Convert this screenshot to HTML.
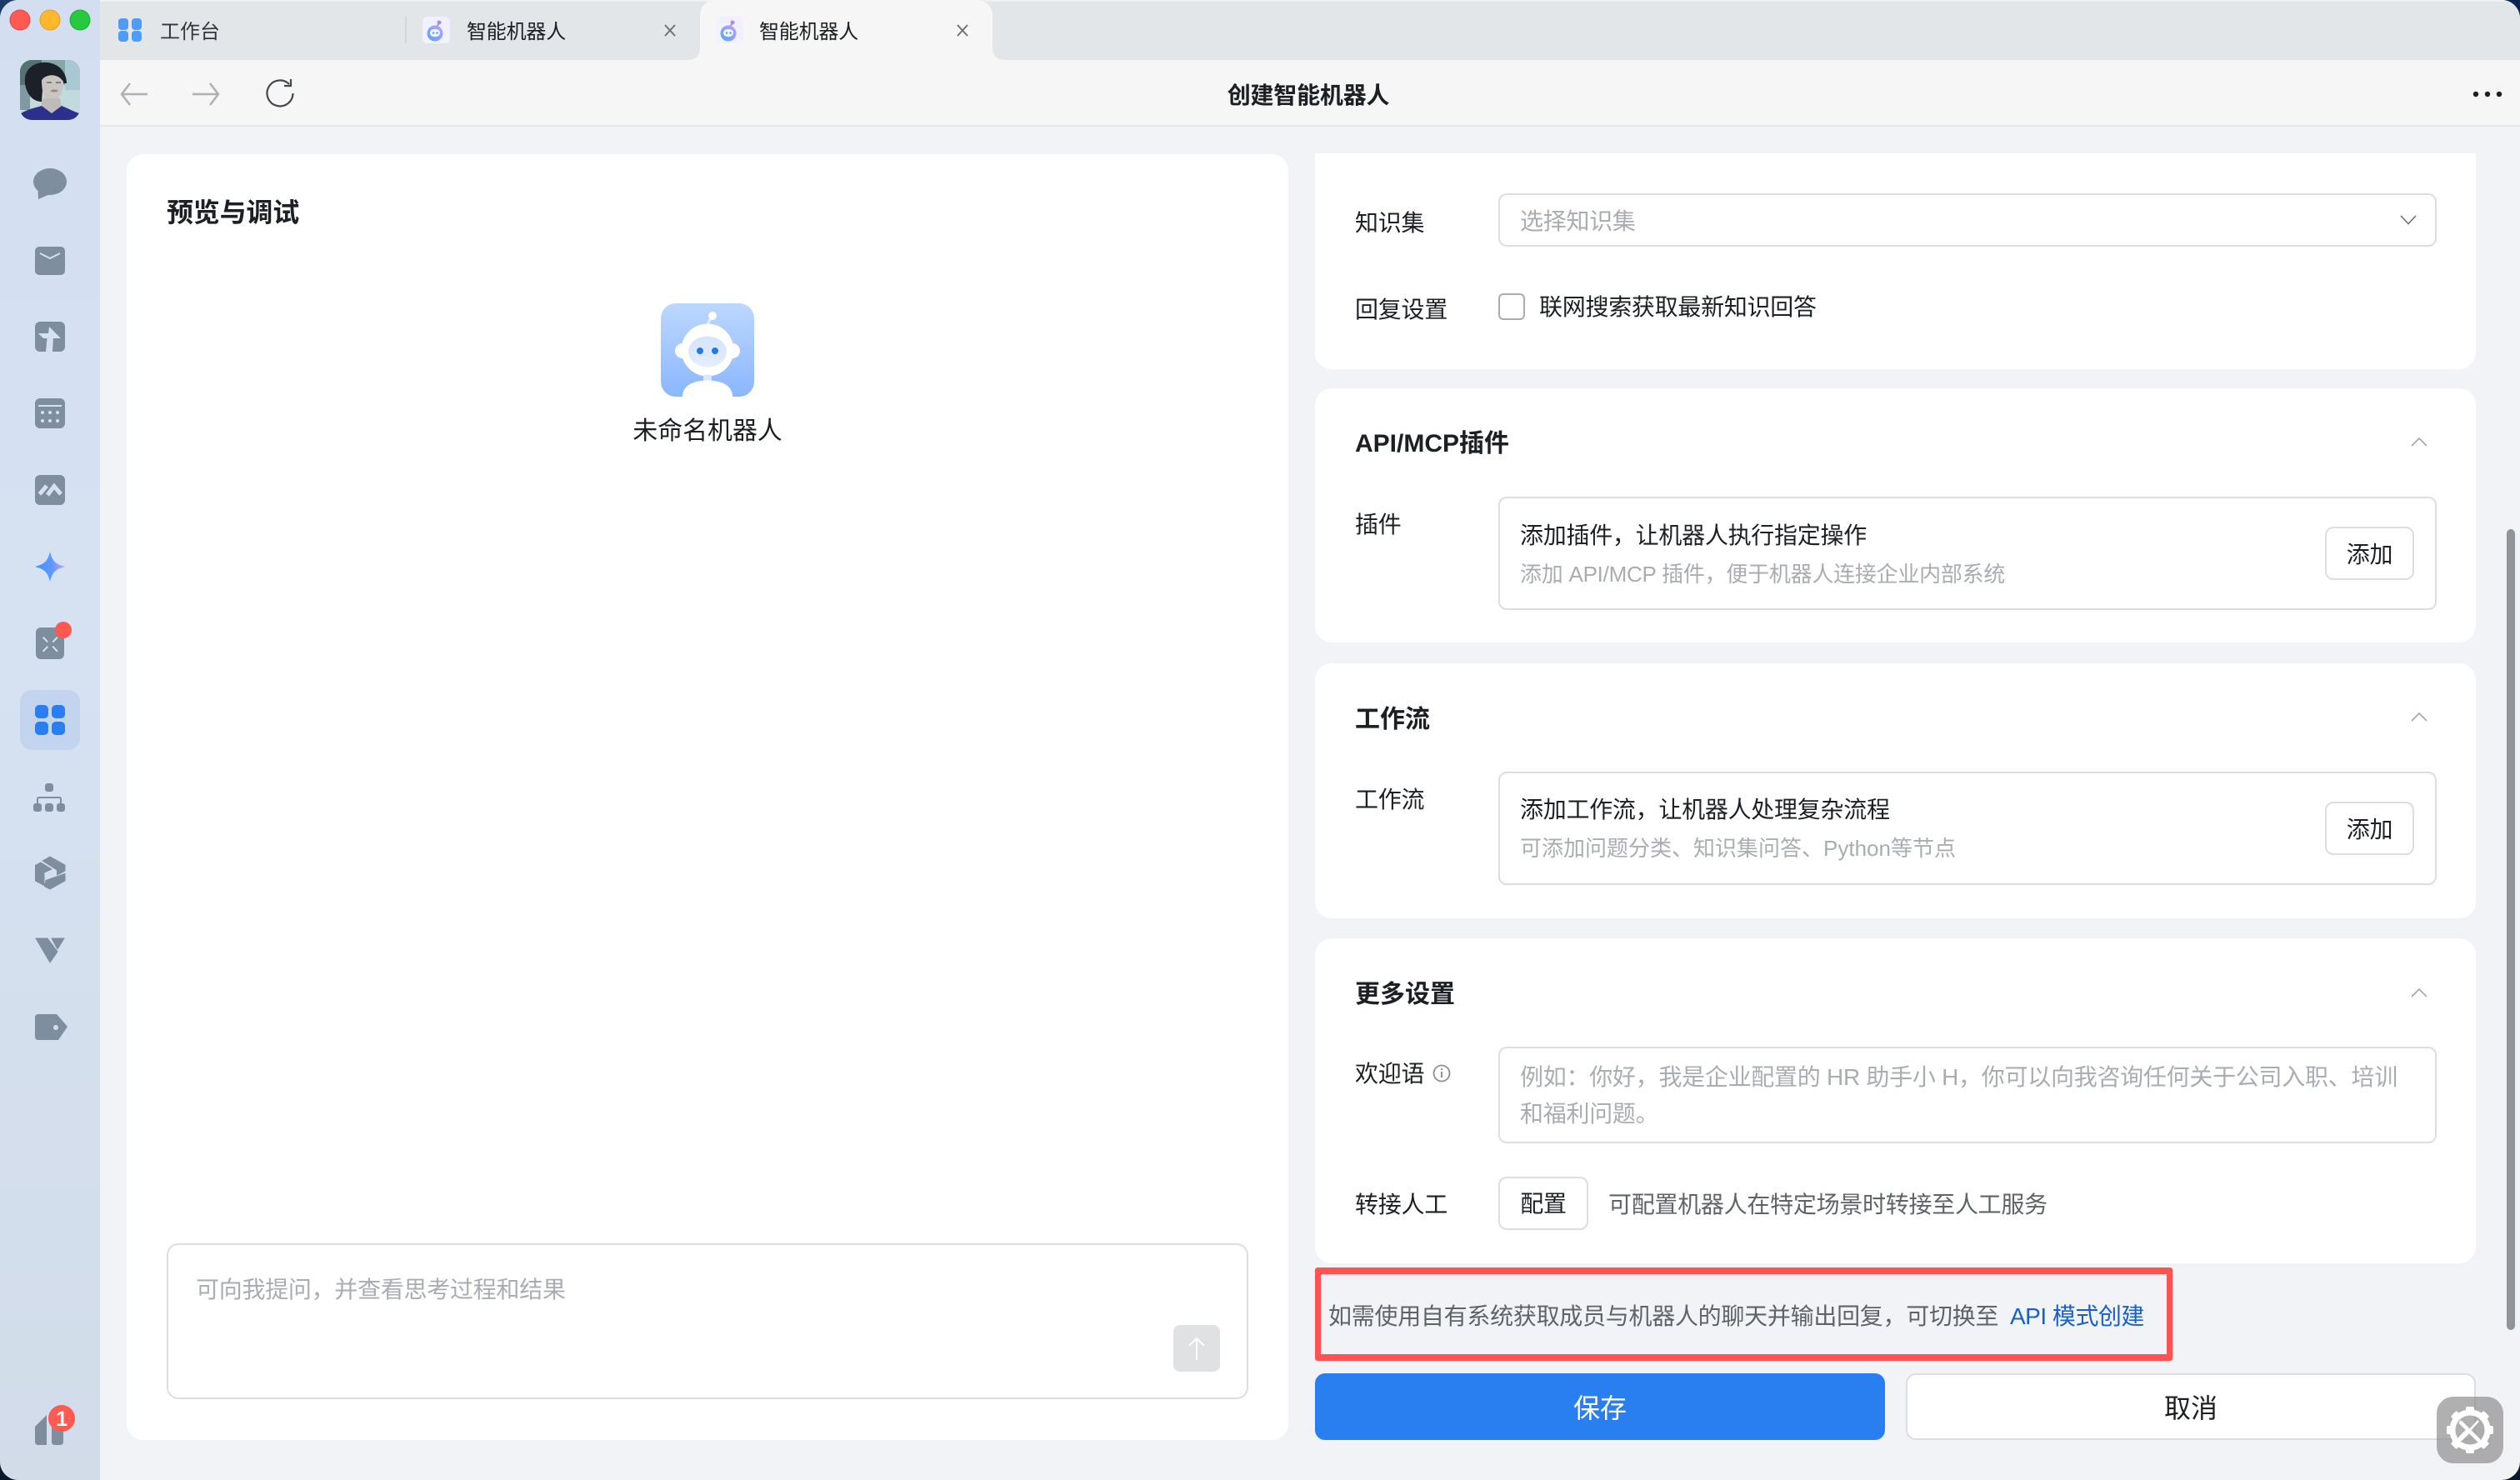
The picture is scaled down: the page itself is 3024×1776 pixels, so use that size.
<!DOCTYPE html>
<html lang="zh"><head><meta charset="utf-8"><title>创建智能机器人</title>
<style>
html,body{margin:0;padding:0;width:3024px;height:1776px;overflow:hidden;background:#0a1a2c}
body{position:relative;font-family:"Liberation Sans","Noto Sans CJK SC",sans-serif;color:#1c1f23;font-size:28px;letter-spacing:-.27px}
div,span{box-sizing:border-box}
.c{position:absolute;width:40px;height:40px}
#win{position:absolute;left:0;top:0;width:3024px;height:1776px;border-radius:22px;overflow:hidden;background:#f1f3f7}
#side{position:absolute;left:0;top:0;width:120px;height:1776px;background:linear-gradient(180deg,#d3dff1 0%,#d6e2f2 40%,#d2dce9 100%)}
#strip{position:absolute;left:120px;top:0;right:0;height:72px;background:#e3e6e9;border-top:2px solid #f0f1f2}
#nav{position:absolute;left:120px;top:72px;right:0;height:80px;background:#f6f6f6;border-bottom:2px solid #e6e8e8}
#tab{position:absolute;left:840px;top:0;width:351px;height:72px;background:#f6f6f6;border-radius:18px 18px 0 0}
.t{position:absolute;white-space:nowrap;line-height:40px;height:40px;margin-top:2px}
.ph{color:#a9acb1}.b{font-weight:700;letter-spacing:0}.s{color:#5f6368}
.card{position:absolute;background:#fff;border-radius:20px}
.box{position:absolute;background:#fff;border:2px solid #dcdde0;border-radius:10px}
.btn{position:absolute;background:#fff;border:2px solid #dcdde0;border-radius:10px;text-align:center}
</style></head><body>
<div class="c" style="left:0;top:0;background:#1d3d66"></div>
<div class="c" style="right:0;top:0;background:#0b2550"></div>
<div class="c" style="left:0;bottom:0;background:#0a1a2c"></div>
<div class="c" style="right:0;bottom:0;background:#0a1a2c"></div>
<div id="win">
<div id="side"></div>
<div id="strip"></div>
<div id="nav"></div>
<div id="tab"></div>
<span class="t" style="left:192px;top:17px;font-size:24px;color:#33363b;letter-spacing:0">工作台</span>
<div style="position:absolute;left:486px;top:20px;width:2px;height:32px;background:#d3d6d9"></div>
<span class="t" style="left:560px;top:17px;font-size:24px;letter-spacing:-.2px">智能机器人</span>
<span class="t" style="left:911px;top:17px;font-size:24px;letter-spacing:-.2px">智能机器人</span>
<span class="t b" style="left:1470px;width:200px;text-align:center;top:93px;letter-spacing:-.2px">创建智能机器人</span>

<div class="card" style="left:152px;top:185px;width:1394px;height:1543px"></div>
<span class="t b" style="left:200px;top:233px;font-size:32px;letter-spacing:-.2px">预览与调试</span>
<span class="t" style="left:749px;width:200px;text-align:center;top:496px;font-size:30px;letter-spacing:-.1px">未命名机器人</span>
<div class="box" style="left:200px;top:1492px;width:1298px;height:187px;border-radius:14px"></div>
<span class="t ph" style="left:235px;top:1526px">可向我提问，并查看思考过程和结果</span>

<div class="card" style="left:1578px;top:184px;width:1393px;height:259px;border-radius:0 0 20px 20px"></div>
<span class="t" style="left:1626px;top:246px">知识集</span>
<div class="box" style="left:1798px;top:232px;width:1126px;height:64px"></div>
<span class="t ph" style="left:1824px;top:244px">选择知识集</span>
<span class="t" style="left:1626px;top:350px">回复设置</span>
<div class="box" style="left:1798px;top:352px;width:32px;height:32px;border-color:#a8abb0;border-radius:6px"></div>
<span class="t" style="left:1847px;top:347px">联网搜索获取最新知识回答</span>

<div class="card" style="left:1578px;top:466px;width:1393px;height:305px"></div>
<span class="t b" style="left:1626px;top:511px;font-size:30px">API/MCP插件</span>
<span class="t" style="left:1626px;top:608px">插件</span>
<div class="box" style="left:1798px;top:596px;width:1126px;height:136px"></div>
<span class="t" style="left:1824px;top:621px">添加插件，让机器人执行指定操作</span>
<span class="t ph" style="left:1824px;top:667px;font-size:26px;letter-spacing:-.25px">添加 API/MCP 插件，便于机器人连接企业内部系统</span>
<div class="btn" style="left:2790px;top:632px;width:107px;height:64px;line-height:64px">添加</div>

<div class="card" style="left:1578px;top:796px;width:1393px;height:306px"></div>
<span class="t b" style="left:1626px;top:842px;font-size:30px">工作流</span>
<span class="t" style="left:1626px;top:938px">工作流</span>
<div class="box" style="left:1798px;top:926px;width:1126px;height:136px"></div>
<span class="t" style="left:1824px;top:950px">添加工作流，让机器人处理复杂流程</span>
<span class="t ph" style="left:1824px;top:996px;font-size:26px;letter-spacing:0">可添加问题分类、知识集问答、Python等节点</span>
<div class="btn" style="left:2790px;top:962px;width:107px;height:64px;line-height:64px">添加</div>

<div class="card" style="left:1578px;top:1126px;width:1393px;height:390px"></div>
<span class="t b" style="left:1626px;top:1172px;font-size:30px">更多设置</span>
<span class="t" style="left:1626px;top:1267px">欢迎语</span>
<div class="box" style="left:1798px;top:1256px;width:1126px;height:116px"></div>
<div class="t ph" style="left:1824px;top:1269px;height:88px;line-height:44px">例如：你好，我是企业配置的 HR 助手小 H，你可以向我咨询任何关于公司入职、培训<br>和福利问题。</div>
<span class="t" style="left:1626px;top:1424px">转接人工</span>
<div class="btn" style="left:1798px;top:1412px;width:108px;height:64px;line-height:62px">配置</div>
<span class="t s" style="left:1930px;top:1424px">可配置机器人在特定场景时转接至人工服务</span>

<div style="position:absolute;left:1578px;top:1521px;width:1029px;height:112px;border:7px solid #ff5252;border-width:8px 7px;border-radius:3px"></div>
<span class="t s" style="left:1594px;top:1558px">如需使用自有系统获取成员与机器人的聊天并输出回复，可切换至</span>
<span class="t" style="left:2412px;top:1558px;color:#1a60c4;letter-spacing:-.5px">API 模式创建</span>

<div style="position:absolute;left:1578px;top:1648px;width:684px;height:80px;background:#2a7ff0;border-radius:12px;color:#fff;text-align:center;font-size:32px;line-height:84px;letter-spacing:0">保存</div>
<div class="btn" style="left:2287px;top:1648px;width:684px;height:80px;font-size:32px;line-height:80px;border-radius:12px;letter-spacing:0">取消</div>
<div style="position:absolute;left:3008px;top:635px;width:10px;height:961px;border-radius:5px;background:#919498"></div>

<svg width="3024" height="1776" viewBox="0 0 3024 1776" style="position:absolute;left:0;top:0">
<defs>
<linearGradient id="star" x1="0" x2="1" y1="0" y2="0"><stop offset="0" stop-color="#3f90ff"/><stop offset=".55" stop-color="#5f98ff"/><stop offset="1" stop-color="#c3a2f2"/></linearGradient>
<linearGradient id="bot" x1="0" x2="0" y1="0" y2="1"><stop offset="0" stop-color="#bdd7ff"/><stop offset="1" stop-color="#8ab7ff"/></linearGradient>
<linearGradient id="face" x1="0" x2="0" y1="0" y2="1"><stop offset="0" stop-color="#d4e4fb"/><stop offset="1" stop-color="#e4eefd"/></linearGradient>
<linearGradient id="tb" x1="0" x2="1" y1="1" y2="0"><stop offset="0" stop-color="#5aa0fa"/><stop offset="1" stop-color="#bda6f4"/></linearGradient>
<linearGradient id="tbg" x1="0" x2="1" y1="1" y2="0"><stop offset="0" stop-color="#eef4ff"/><stop offset="1" stop-color="#f4eeff"/></linearGradient>
<clipPath id="avc"><rect x="24" y="72" width="72" height="72" rx="14"/></clipPath>
</defs>
<!-- traffic lights -->
<circle cx="24" cy="24" r="12" fill="#ff5a52" stroke="#e2463f"/>
<circle cx="60" cy="24" r="12" fill="#ffb82e" stroke="#e09d20"/>
<circle cx="96" cy="24" r="12" fill="#27c93f" stroke="#1fae33"/>
<!-- avatar -->
<g clip-path="url(#avc)">
<rect x="24" y="72" width="72" height="72" fill="#c2d9de"/>
<rect x="24" y="72" width="72" height="30" fill="#86a6a9"/>
<rect x="24" y="72" width="26" height="34" fill="#55736f"/>
<rect x="78" y="72" width="18" height="36" fill="#a8c9d2"/>
<rect x="24" y="102" width="12" height="30" fill="#7f9aa0"/>
<path d="M30 100 C28 82 42 74 56 75 C70 76 80 86 80 100 L76 100 C72 92 60 90 52 94 L50 122 C40 122 32 114 30 100Z" fill="#1c2028"/>
<path d="M50 96 C56 88 70 88 76 98 C77 108 72 120 62 122 C54 122 50 112 50 96Z" fill="#c9c5c3"/>
<path d="M56 99 H62 M67 99 H73" stroke="#5a5256" stroke-width="1.200"/>
<ellipse cx="65" cy="109" rx="4.500" ry="1.500" fill="#a08484"/>
<path d="M50 118 L72 118 L74 130 L62 136 L50 130Z" fill="#bfbbba"/>
<path d="M24 144 V137 C32 131 44 129 50 127 L62 136 L74 127 C82 130 90 135 96 136 V144Z" fill="#2d2f8c"/>
</g>
<!-- tab icons -->
<g fill="#4f9bf7"><rect x="142" y="22" width="12" height="14" rx="4"/><rect x="158" y="22" width="12" height="14" rx="4"/><rect x="142" y="37" width="12" height="13" rx="4"/><rect x="158" y="37" width="12" height="13" rx="4"/></g>
<g>
<rect x="507" y="20" width="33" height="32" rx="6" fill="url(#tbg)"/>
<circle cx="527" cy="27" r="2.500" fill="#a78bf0"/><path d="M526 29 L523.500 33" stroke="#a78bf0" stroke-width="2"/>
<circle cx="522" cy="40" r="9.500" fill="url(#tb)"/><rect x="516" y="35" width="12" height="9" rx="4.500" fill="#f4f7ff"/>
<circle cx="520" cy="39.500" r="1.300" fill="#5aa0fa"/><circle cx="524.500" cy="39.500" r="1.300" fill="#5aa0fa"/>
</g>
<g transform="translate(352,0)">
<rect x="507" y="20" width="33" height="32" rx="6" fill="url(#tbg)"/>
<circle cx="527" cy="27" r="2.500" fill="#a78bf0"/><path d="M526 29 L523.500 33" stroke="#a78bf0" stroke-width="2"/>
<circle cx="522" cy="40" r="9.500" fill="url(#tb)"/><rect x="516" y="35" width="12" height="9" rx="4.500" fill="#f4f7ff"/>
<circle cx="520" cy="39.500" r="1.300" fill="#5aa0fa"/><circle cx="524.500" cy="39.500" r="1.300" fill="#5aa0fa"/>
</g>
<path d="M798 30 L810 43 M810 30 L798 43 M1149 30 L1161 43 M1161 30 L1149 43" stroke="#6f7378" stroke-width="2" fill="none"/>
<path d="M825 72 Q840 72 840 57 V72Z M1191 57 Q1191 72 1206 72 H1191Z" fill="#f6f6f6"/>
<!-- nav -->
<path d="M177 113 H146 M156 100 L146 113 L156 126 M231 113 H262 M252 100 L262 113 L252 126" stroke="#aeb0b3" stroke-width="2.500" fill="none"/>
<path d="M347 101 A15.500 15.500 0 1 0 351.500 112" stroke="#44474b" stroke-width="2.200" fill="none"/>
<path d="M349 95 V103 H341" stroke="#44474b" stroke-width="2.200" fill="none"/>
<circle cx="2971" cy="113" r="3.200" fill="#1c1f23"/><circle cx="2985" cy="113" r="3.200" fill="#1c1f23"/><circle cx="2999" cy="113" r="3.200" fill="#1c1f23"/>
<!-- sidebar icons -->
<g fill="#7f8e9e">
<ellipse cx="60" cy="218" rx="20" ry="16"/><path d="M45.500 228 L46 239 L60 233Z"/>
<rect x="42" y="296" width="36" height="34" rx="5"/>
<rect x="42" y="386" width="36" height="36" rx="6"/>
<rect x="42" y="478" width="36" height="36" rx="6"/>
<rect x="42" y="570" width="36" height="36" rx="6"/>
<rect x="43" y="753" width="34" height="38" rx="6"/>
<rect x="54" y="940" width="10" height="10" rx="3"/>
<rect x="40" y="964" width="10" height="10" rx="3"/><rect x="54" y="964" width="10" height="10" rx="3"/><rect x="68" y="964" width="10" height="10" rx="3"/>
<g stroke="#7f8e9e" stroke-width="1" stroke-linejoin="round">
<path d="M51 1033 L60 1028 L78 1038 V1045 L68.500 1050 V1044Z"/>
<path d="M55 1056.500 L78 1048.500 V1057 L60 1067 L53.500 1063.500Z"/>
<path d="M42.500 1038.500 L49 1035 L62 1043 L53 1047 V1062.500 L42.500 1057Z"/>
</g>
<path d="M43 1126 H57 L69 1142 L60 1155Z" stroke="#7f8e9e" stroke-width="1" stroke-linejoin="round"/>
<path d="M62 1126 H77 L69 1139Z" stroke="#7f8e9e" stroke-width="1" stroke-linejoin="round"/>
<path d="M46 1217 H68 L81 1232 L70 1248 H46 Q42 1248 42 1244 V1221 Q42 1217 46 1217Z"/>
<path d="M42 1712 L56 1698 V1734 H46 Q42 1734 42 1730Z"/>
<path d="M62 1708 H76 V1730 Q76 1734 72 1734 H66 Q62 1734 62 1730Z"/>
</g>
<path d="M48 304 L60 310 L72 304" stroke="#d5e0f0" stroke-width="2" fill="none"/>
<polygon points="46,400 58,400 59,392 73,406 64,406 63,422 55,422 56.500,406 52,406" fill="#d5e0f0"/>
<path d="M46 487 H74" stroke="#d5e0f0" stroke-width="2"/>
<g fill="#d5e0f0"><circle cx="51" cy="495" r="2"/><circle cx="60" cy="495" r="2"/><circle cx="69" cy="495" r="2"/><circle cx="51" cy="505" r="2"/><circle cx="60" cy="505" r="2"/><circle cx="69" cy="505" r="2"/></g>
<path d="M47.500 593 L56 583 M57 594 L65 583.500 L73 593" stroke="#d5e0f0" stroke-width="5" fill="none"/>
<path d="M60 662 C63 674 67 677 78 680 C67 683 63 686 60 698 C57 686 53 683 42 680 C53 677 57 674 60 662Z" fill="url(#star)"/>
<path d="M51.600 764.600 L57.300 770.400 M63.300 770.400 L69 764.600 M51.600 781.800 L57.300 775.700 M63.300 775.700 L69 781.800" stroke="#d5e0f0" stroke-width="2"/>
<circle cx="76" cy="756" r="10" fill="#ff5a52"/>
<rect x="24" y="828" width="72" height="72" rx="14" fill="#c3d4ee"/>
<g fill="#2a7ff0"><rect x="42" y="846" width="16" height="16" rx="5"/><rect x="62" y="846" width="16" height="16" rx="5"/><rect x="42" y="866" width="16" height="16" rx="5"/><rect x="62" y="866" width="16" height="16" rx="5"/></g>
<path d="M45 964 V959 Q45 957 47 957 H71 Q73 957 73 959 V964" stroke="#7f8e9e" stroke-width="2" fill="none"/>
<circle cx="67" cy="1233" r="3" fill="#d3deed"/>
<circle cx="74" cy="1702" r="16" fill="#ff5a52"/>
<text x="74" y="1711" text-anchor="middle" font-family="Liberation Sans" font-weight="700" font-size="25" fill="#fff">1</text>
<!-- robot -->
<g transform="translate(793,364)">
<rect width="112" height="112" rx="18" fill="url(#bot)"/>
<path d="M56 26 L60 17" stroke="#e4eefd" stroke-width="3"/><circle cx="62" cy="15" r="5" fill="#fff"/>
<circle cx="26" cy="57" r="9" fill="#fff"/><circle cx="86" cy="57" r="9" fill="#fff"/>
<circle cx="56" cy="56" r="31.500" fill="#fff"/>
<ellipse cx="56" cy="58" rx="23" ry="18.500" fill="url(#face)"/>
<circle cx="47" cy="57" r="4" fill="#1f7af0"/><circle cx="65" cy="57" r="4" fill="#1f7af0"/>
<rect x="51" y="86" width="10" height="8" fill="#dbe8fc"/>
<path d="M26 112 C26 98 40 92.500 56 92.500 S86 98 86 112Z" fill="#fff"/>
</g>
<!-- send -->
<rect x="1408" y="1590" width="56" height="56" rx="8" fill="#e0e1e3"/>
<path d="M1436 1632 V1606 M1427 1615 L1436 1606 L1445 1615" stroke="#fff" stroke-width="2" fill="none"/>
<!-- chevrons -->
<path d="M2881 259 L2890 268.500 L2899 259" stroke="#6b6e73" stroke-width="1.600" fill="none"/>
<path d="M2894 535 L2903 526 L2912 535 M2894 865 L2903 856 L2912 865 M2894 1196 L2903 1187 L2912 1196" stroke="#a3a6aa" stroke-width="1.600" fill="none"/>
<!-- info -->
<circle cx="1730" cy="1288" r="9.500" stroke="#8d9095" stroke-width="1.800" fill="none"/>
<path d="M1730 1286 V1293 M1730 1282 V1284" stroke="#8d9095" stroke-width="2"/>
<!-- gear -->
<rect x="2924" y="1676" width="80" height="80" rx="20" fill="#8a8a8a" fill-opacity=".68"/>
<g transform="translate(2964,1716)">
<circle r="21" fill="none" stroke="#fff" stroke-width="7"/>
<g fill="#fff"><rect x="-5" y="-28" width="10" height="8" rx="2"/><rect x="-5" y="20" width="10" height="8" rx="2"/><rect x="-5" y="-28" width="10" height="8" rx="2" transform="rotate(45)"/><rect x="-5" y="20" width="10" height="8" rx="2" transform="rotate(45)"/><rect x="-5" y="-28" width="10" height="8" rx="2" transform="rotate(90)"/><rect x="-5" y="20" width="10" height="8" rx="2" transform="rotate(90)"/><rect x="-5" y="-28" width="10" height="8" rx="2" transform="rotate(135)"/><rect x="-5" y="20" width="10" height="8" rx="2" transform="rotate(135)"/></g>
<path d="M-11 -9 L10 12" stroke="#fff" stroke-width="4.500" stroke-linecap="round"/>
<path d="M10 -11 L-2 2" stroke="#fff" stroke-width="2.500"/>
<path d="M-4 3 L-11 10" stroke="#fff" stroke-width="6" stroke-linecap="round"/>
</g>
</svg>
</div>
</body></html>
